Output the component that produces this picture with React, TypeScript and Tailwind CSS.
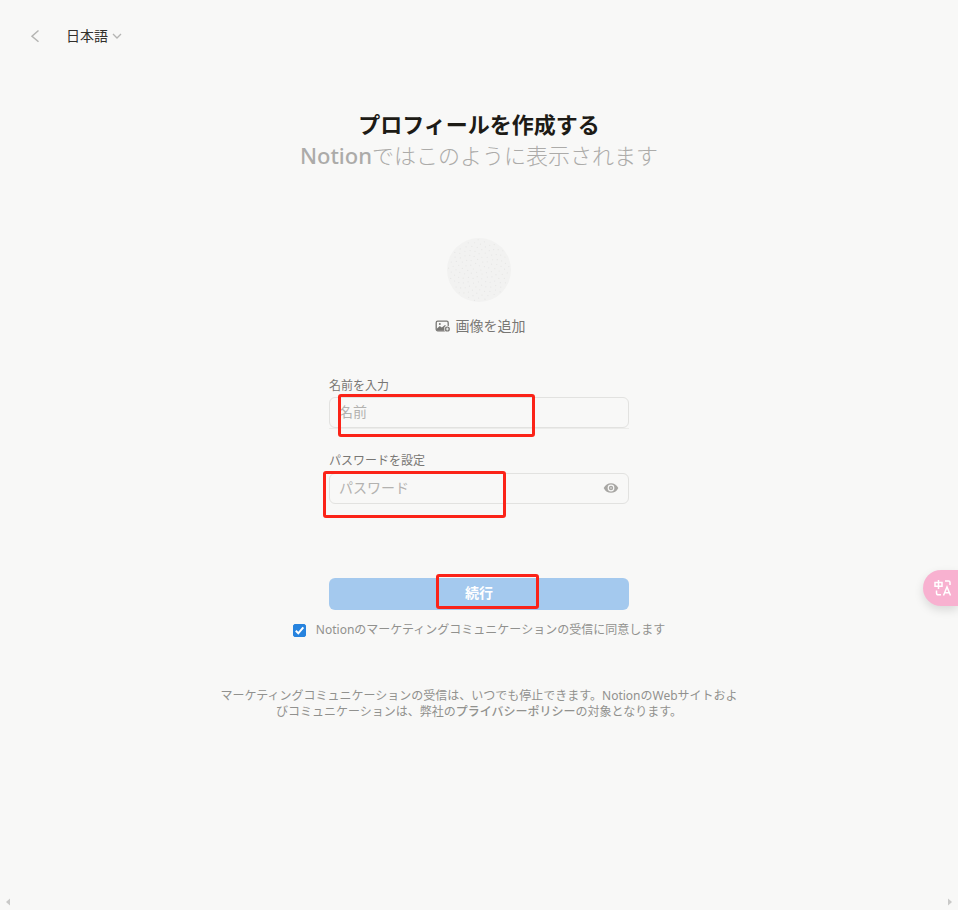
import React from 'react';

const dots = Array.from({ length: 130 }, (_, i) => {
  const radius = 2.7 * Math.sqrt(i + 0.5);
  const angle = i * 2.39996;
  return { x: 32 + radius * Math.cos(angle), y: 32 + radius * Math.sin(angle) };
});

function Header() {
  return (
    <header className="flex h-[72px] items-center pl-7">
      <button type="button" aria-label="戻る" className="flex size-4 items-center justify-center text-[#b5b5b3]">
        <svg width="16" height="16" viewBox="0 0 16 16" fill="none" stroke="currentColor" strokeWidth="1.5">
          <path d="M10.5 2.500 4 8.200l6.500 5.600" />
        </svg>
      </button>
      <button type="button" className="ml-[22px] flex items-center gap-1 text-[14px] leading-5 text-[#32302c]">
        日本語
        <svg width="10" height="10" viewBox="0 0 10 10" fill="none" stroke="#b5b5b3" strokeWidth="1.300">
          <path d="M1 3l4 4 4-4" />
        </svg>
      </button>
    </header>
  );
}

function Avatar() {
  return (
    <div className="mt-[67px] flex flex-col items-center">
      <svg width="64" height="64" viewBox="0 0 64 64" aria-hidden="true">
        <circle cx="32" cy="32" r="32" fill="#f2f2f1" />
        {dots.map((d, i) => (
          <circle key={i} cx={d.x} cy={d.y} r="0.6" fill="#e6e6e5" />
        ))}
      </svg>
      <button type="button" className="mt-[14px] flex items-center gap-[5px] pl-[2px] text-[14px] leading-5 text-[#787774]">
        <svg width="16" height="16" viewBox="0 0 16 16" fill="none" aria-hidden="true">
          <rect x="1.200" y="3.200" width="12" height="9.600" rx="1.500" stroke="currentColor" strokeWidth="1.300" />
          <path d="M2 12V10.500L4.800 8l2 1.600L10 7l2 2v3.500H2z" fill="currentColor" />
          <circle cx="4.800" cy="6" r="1" fill="currentColor" />
          <circle cx="12.300" cy="11" r="3.200" fill="#f8f8f7" />
          <circle cx="12.300" cy="11" r="2.600" fill="currentColor" />
          <path d="M12.300 9.500v3M10.800 11h3" stroke="#f8f8f7" strokeWidth="0.900" />
        </svg>
        画像を追加
      </button>
    </div>
  );
}

const fieldStyle =
  'block h-[31px] w-full rounded-md border border-[#e2e2e0] bg-transparent px-[9px] pb-[2px] text-[14px] text-[#32302c] outline-none placeholder:text-[#b3b2b0]';
const highlight = 'pointer-events-none absolute rounded-[3px] border-3 border-[#fb2318]';

export default function App() {
  return (
    <div className="flex min-h-screen flex-col overflow-hidden bg-[#f8f8f7] font-['Noto_Sans','Noto_Sans_CJK_JP',sans-serif]">
      <Header />
      <main className="flex flex-1 flex-col items-center pt-[37px]">
        <h1 className="text-center text-[22px] leading-[31px] font-bold text-[#1d1b16]">
          プロフィールを作成する
          <span className="block font-light text-[#acaba9]">
            <span className="font-medium">Notion</span>ではこのように表示されます
          </span>
        </h1>

        <Avatar />

        <form className="mt-[42px] flex w-full flex-col items-center" onSubmit={(e) => e.preventDefault()}>
          <div className="w-[300px] max-w-full">
            <label htmlFor="name" className="block text-[12px] leading-4 text-[#787774]">
              名前を入力
            </label>
            <div className="relative mt-[3px] h-8 border-b border-[#ececea]">
              <input id="name" type="text" placeholder="名前" className={fieldStyle} />
              <span className={`${highlight} -top-[3px] left-[9px] h-[43px] w-[197px]`} />
            </div>

            <label htmlFor="password" className="mt-6 block text-[12px] leading-4 text-[#787774]">
              パスワードを設定
            </label>
            <div className="relative mt-1">
              <input id="password" type="password" placeholder="パスワード" className={fieldStyle} />
              <button type="button" aria-label="パスワードを表示" className="absolute top-[7px] right-2.5 text-[#a8a7a4]">
                <svg width="16" height="16" viewBox="0 0 16 16" fill="none">
                  <path d="M.7 8C2.300 4.700 4.900 3.200 8 3.200S13.700 4.700 15.300 8C13.700 11.300 11.100 12.800 8 12.800S2.300 11.300.7 8z" fill="currentColor" />
                  <circle cx="8" cy="8" r="3.400" fill="#f8f8f7" />
                  <circle cx="8" cy="8" r="2.200" fill="currentColor" />
                  <circle cx="8" cy="8" r="0.700" fill="#f8f8f7" />
                </svg>
              </button>
              <span className={`${highlight} -top-[2px] -left-[6px] h-[47px] w-[183px]`} />
            </div>

            <div className="relative mt-[74px]">
              <button type="submit" className="block h-8 w-full rounded-md bg-[#a4c9ee] pb-[3px] text-[14px] leading-5 font-bold text-white">
                続行
              </button>
              <span className={`${highlight} -top-1 left-[107px] h-[35px] w-[103px]`} />
            </div>
          </div>

          <label className="mt-3 flex items-center gap-[10px] text-[12px] leading-4 text-[#91918e]">
            <span className="relative size-[13px]">
              <input type="checkbox" defaultChecked className="peer block size-[13px] appearance-none rounded-[2px] border border-[#999] checked:border-[#2783de] checked:bg-[#2783de]" />
              <svg width="13" height="13" viewBox="0 0 13 13" className="pointer-events-none absolute inset-0 hidden peer-checked:block" fill="none" stroke="white" strokeWidth="2">
                <path d="M2.800 6.800l2.500 2.500 5-6" />
              </svg>
            </span>
            <span>Notionのマーケティングコミュニケーションの受信に同意します</span>
          </label>
        </form>

        <p className="mt-[50px] w-[520px] max-w-full text-center text-[12px] leading-4 text-[#91918e]">
          マーケティングコミュニケーションの受信は、いつでも停止できます。NotionのWebサイトおよびコミュニケーションは、弊社の
          <a href="#privacy" className="inline-block font-medium">プライバシーポリシー</a>の対象となります。
        </p>
      </main>

      <button type="button" aria-label="翻訳" className="fixed top-[570px] right-0 flex h-9 w-[35px] items-center rounded-l-full bg-[#f8b1d0] pl-[11px] text-white shadow-[0_4px_10px_#00000020]">
        <svg width="18" height="18" viewBox="0 0 18 18" fill="none" stroke="currentColor" strokeWidth="1.500" className="shrink-0">
          <path d="M1 3.500h7v3.700H1zM4.500 1v9M11 2h3.500q1.500 0 1.500 1.500V6M2.500 11.500V14q0 1.800 1.800 1.800H7M9.500 16.500 13 8l3.500 8.500M10.500 13.700h5" />
        </svg>
      </button>

      <footer className="flex h-[17px] items-center justify-between px-1 text-[#c9c9c8]" aria-hidden="true">
        <svg width="7" height="8" viewBox="0 0 7 8" fill="currentColor"><path d="M6 .5v7L2 4z" /></svg>
        <svg width="7" height="8" viewBox="0 0 7 8" fill="currentColor"><path d="M1 .5v7L5 4z" /></svg>
      </footer>
    </div>
  );
}
